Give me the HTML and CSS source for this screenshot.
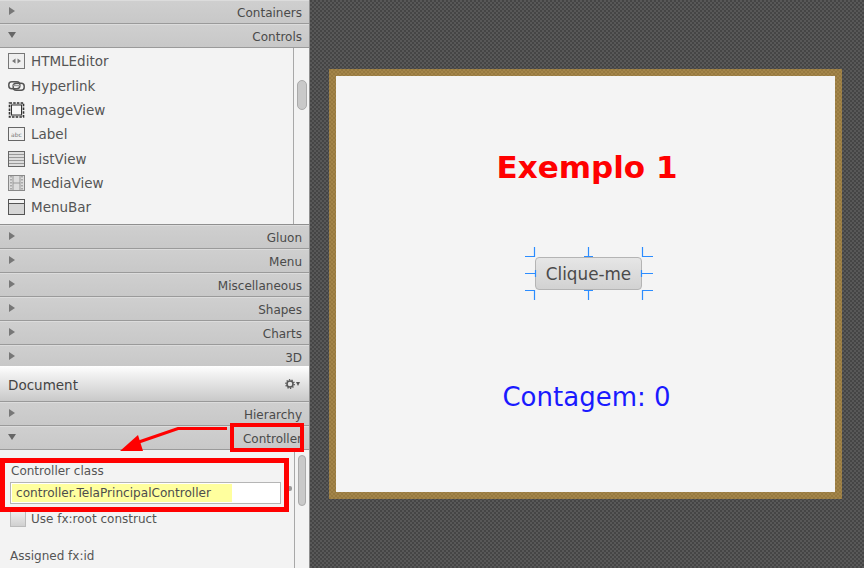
FILE: index.html
```html
<!DOCTYPE html>
<html lang="en">
<head>
	<meta charset="UTF-8">
	<title>Scene Builder</title>
	<link rel="stylesheet" href="styles.css">
</head>
<body>
	<div class="app">
		<div class="side">
			<div class="bar"><i class="tri"></i><span>Containers</span></div>
			<div class="bar"><i class="tri down"></i><span>Controls</span></div>
			<div class="lib">
				<div class="lib-list">
					<div class="item">
						<svg class="ico" viewBox="0 0 17 16"><rect x="0.500" y="0.500" width="16" height="15" fill="#efefef" stroke="#777"/><path d="M7.500 5.500L4 8L7.500 10.500zM9.500 5.500L13 8L9.500 10.500z" fill="#777"/></svg>
						HTMLEditor
					</div>
					<div class="item">
						<svg class="ico" viewBox="0 0 17 16"><rect x="0.800" y="3.800" width="11" height="7" rx="3" fill="none" stroke="#555" stroke-width="1.500"/><rect x="5.200" y="5.200" width="11" height="7" rx="3" fill="none" stroke="#555" stroke-width="1.500"/><path d="M4 7.500H13" stroke="#999" stroke-width="1.500"/></svg>
						Hyperlink
					</div>
					<div class="item">
						<svg class="ico" viewBox="0 0 17 16"><rect x="1.500" y="1" width="14" height="14" fill="#ddd" stroke="#333" stroke-width="1.600" stroke-dasharray="2.500 1.200"/><rect x="3.500" y="3" width="10" height="10" fill="#f8f8f8" stroke="#333"/></svg>
						ImageView
					</div>
					<div class="item">
						<svg class="ico" viewBox="0 0 17 16"><rect x="0.500" y="1.500" width="16" height="13" fill="#f0f0f0" stroke="#666"/><text x="8.500" y="10.500" text-anchor="middle" class="abc">abc</text></svg>
						Label
					</div>
					<div class="item">
						<svg class="ico" viewBox="0 0 17 16"><rect x="0.500" y="0.500" width="16" height="15" fill="#ddd" stroke="#666"/><path d="M1 3.500H16M1 6.500H16M1 9.500H16M1 12.500H16" stroke="#999"/></svg>
						ListView
					</div>
					<div class="item">
						<svg class="ico" viewBox="0 0 17 16"><rect x="0.500" y="0.500" width="16" height="15" fill="#ddd" stroke="#888"/><path d="M5 1V15M12 1V15M5 8H12" stroke="#999"/><path d="M3 1V15M14 1V15" stroke="#aaa" stroke-width="2" stroke-dasharray="1.500 1.500"/></svg>
						MediaView
					</div>
					<div class="item">
						<svg class="ico" viewBox="0 0 17 16"><rect x="0.500" y="0.500" width="16" height="15" fill="#d6d6d6" stroke="#555"/><rect x="1" y="1" width="15" height="3.500" fill="#f4f4f4"/><path d="M1 4.500H16" stroke="#555"/></svg>
						MenuBar
					</div>
					<div class="item">
						<svg class="ico" viewBox="0 0 17 16"><rect x="0.500" y="0.500" width="16" height="15" fill="#ddd" stroke="#333"/></svg>
					</div>
				</div>
				<div class="track"><div class="thumb thumb-lib"></div></div>
			</div>
			<div class="bar bar-sep"><i class="tri"></i><span>Gluon</span></div>
			<div class="bar"><i class="tri"></i><span>Menu</span></div>
			<div class="bar"><i class="tri"></i><span>Miscellaneous</span></div>
			<div class="bar"><i class="tri"></i><span>Shapes</span></div>
			<div class="bar"><i class="tri"></i><span>Charts</span></div>
			<div class="bar bar-last"><i class="tri"></i><span>3D</span></div>
			<div class="doc">
				<span>Document</span>
				<span class="gear">
					<svg width="10" height="10" viewBox="0 0 10 10"><circle cx="5" cy="5" r="3" fill="none" stroke="#555" stroke-width="1.500"/><circle cx="5" cy="5" r="4.200" fill="none" stroke="#555" stroke-width="1.400" stroke-dasharray="1.300 1.300"/></svg>
					<i class="gear-tri"></i>
				</span>
			</div>
			<div class="bar"><i class="tri"></i><span>Hierarchy</span></div>
			<div class="bar"><i class="tri down"></i><span>Controller</span></div>
			<div class="ctrl">
				<div class="ctrl-body">
					<div class="ctrl-label">Controller class</div>
					<div class="input"><span class="mark">controller.TelaPrincipalController</span></div>
					<div class="check-row"><i class="check"></i>Use fx:root construct</div>
					<div class="assigned">Assigned fx:id</div>
				</div>
				<div class="track track-ctrl"><div class="thumb thumb-ctrl"></div></div>
			</div>

			<!-- marcacoes vermelhas por cima da tela -->
			<i class="tiny-gear"></i>
			<div class="red-box box-class"></div>
			<div class="red-box box-title"></div>
			<svg class="red-arrow" width="310" height="568" viewBox="0 0 310 568">
				<path d="M227 428.500H178L136 443" fill="none" stroke="#f00" stroke-width="3"/>
				<path d="M120 451L138 435L143 451z" fill="#f00"/>
			</svg>
		</div>
		<div class="stage">
			<div class="frame">
				<h1 class="title">Exemplo 1</h1>
				<div class="btn-wrap">
					<div class="btn">Clique-me</div>
					<svg class="handles" width="130" height="56" viewBox="0 0 130 56">
						<path d="M10.500 1V11M1 10.500H11M118.500 1V11M118 10.500H129M64.500 1V11M60 10.500H69M10.500 44V54M1 44.500H11M118.500 44V54M118 44.500H129M64.500 44V54M60 44.500H69M1 27.500H11M118 27.500H129M11.500 24V31M117.500 24V31" fill="none" stroke="#2b8cff" stroke-width="1.200"/>
					</svg>
				</div>
				<div class="count">Contagem: 0</div>
			</div>
		</div>
	</div>
</body>
</html>
```

FILE: styles.css
```css
*{
	margin: 0;
	padding: 0;
	box-sizing: border-box;
}
html,body{
	width: 864px;
	height: 568px;
	overflow: hidden;
}
body{
	font-family: "DejaVu Sans", sans-serif;
	color: #4d4d4d;
}
.app{
	display: flex;
	width: 864px;
	height: 568px;
}
.side{
	position: relative;
	width: 310px;
	height: 568px;
	overflow: hidden;
	background: #f3f3f3;
	border-right: 1px solid #8f8f8f;
	display: flex;
	flex-direction: column;
}
.bar{
	flex: none;
	height: 24px;
	display: flex;
	align-items: center;
	justify-content: space-between;
	padding: 2px 7px 0 9px;
	background: linear-gradient(#cfcfcf, #c8c8c8);
	border-top: 1px solid #dcdcdc;
	border-bottom: 1px solid #9a9a9a;
	font-size: 12px;
	color: #4a4a4a;
}
.bar-last{
	height: 21px;
	padding-top: 4px;
	border-bottom: 0;
}
.tri{
	display: block;
	width: 0;
	height: 0;
	margin-top: -4px;
	border-left: 6px solid #777;
	border-top: 4px solid transparent;
	border-bottom: 4px solid transparent;
}
.tri.down{
	margin-left: -1px;
	border-top: 6px solid #666;
	border-left: 4px solid transparent;
	border-right: 4px solid transparent;
	border-bottom: 0;
}
.lib{
	flex: none;
	height: 177px;
	display: flex;
	border-bottom: 1px solid #8f8f8f;
	overflow: hidden;
}
.lib-list{
	flex: 1;
	padding: 1.100px 0 0 8px;
}
.item{
	height: 24.33px;
	display: flex;
	align-items: center;
	gap: 6px;
	font-size: 13.500px;
	color: #555;
}
.ico{
	width: 17px;
	height: 16px;
	flex: none;
}
.abc{
	font-size: 6px;
	fill: #777;
}
.track{
	flex: none;
	width: 16px;
	border-left: 1px solid #a8a8a8;
	position: relative;
}
.track-ctrl{
	width: 15px;
}
.thumb{
	position: absolute;
	left: 3px;
	width: 10px;
	background: #c9c9c9;
	border: 1px solid #aaa;
	border-radius: 5px;
}
.thumb-lib{
	top: 32px;
	height: 30px;
}
.thumb-ctrl{
	width: 8px;
	top: 5px;
	height: 51px;
}
.doc{
	flex: none;
	height: 36px;
	display: flex;
	align-items: center;
	justify-content: space-between;
	padding: 2px 9px 0 8px;
	background: linear-gradient(#fff, #f0f0f0 25%, #c9c9c9);
	border-bottom: 1px solid #999;
	font-size: 13.500px;
	color: #444;
}
.gear{
	display: flex;
	align-items: center;
	gap: 1px;
	margin-top: -2px;
}
.gear-tri{
	display: block;
	width: 0;
	height: 0;
	border-top: 4px solid #555;
	border-left: 2.500px solid transparent;
	border-right: 2.500px solid transparent;
}
.ctrl{
	flex: 1;
	display: flex;
	overflow: hidden;
}
.ctrl-body{
	flex: 1;
	padding: 14px 13px 0 10px;
	font-size: 12px;
	color: #555;
}
.ctrl-label{
	padding-left: 1px;
	line-height: 14px;
}
.input{
	height: 22px;
	margin-top: 4px;
	padding: 1px;
	background: #fff;
	border: 1px solid #b5b5b5;
}
.mark{
	display: block;
	width: 220px;
	height: 18px;
	padding-left: 4px;
	line-height: 18px;
	font-size: 12.100px;
	background: #ffff9e;
	color: #4d4d4d;
}
.check-row{
	display: flex;
	align-items: center;
	gap: 5px;
	height: 16px;
	margin-top: 7px;
}
.check{
	display: block;
	width: 16px;
	height: 16px;
	background: linear-gradient(#eee, #d0d0d0);
	border: 1px solid #bbb;
}
.assigned{
	margin-top: 22px;
}
.tiny-gear{
	position: absolute;
	left: 289px;
	top: 486px;
	width: 3px;
	height: 5px;
	background: #999;
	border-radius: 0 2px 2px 0;
}
.red-box{
	position: absolute;
	border-style: solid;
	border-color: #f00;
}
.box-class{
	left: 0;
	top: 458px;
	width: 289px;
	height: 54px;
	border-width: 5px;
}
.box-title{
	left: 230px;
	top: 423px;
	width: 74px;
	height: 29px;
	border-width: 4px;
}
.red-arrow{
	position: absolute;
	left: 0;
	top: 0;
}
.stage{
	flex: 1;
	display: flex;
	padding: 69px 22px 69px 19px;
	background-color: #4d4d4d;
	background-image: conic-gradient(#585858 25%, #454545 0 50%, #585858 0 75%, #454545 0);
	background-size: 4px 4px;
}
.frame{
	width: 513px;
	height: 430px;
	border: 7px solid transparent;
	background:
		linear-gradient(#f4f4f4, #f4f4f4) padding-box,
		conic-gradient(#a3854a 25%, #977a40 0 50%, #a3854a 0 75%, #977a40 0) border-box;
	background-size: auto, 4px 4px;
	display: flex;
	flex-direction: column;
	align-items: center;
	padding-top: 73px;
}
.title{
	margin-left: 3px;
	font-size: 31px;
	line-height: 37px;
	font-weight: bold;
	color: #f00;
}
.btn-wrap{
	position: relative;
	margin-top: 71px;
	margin-left: 6px;
}
.btn{
	width: 107px;
	height: 33px;
	display: flex;
	align-items: center;
	justify-content: center;
	font-size: 16.800px;
	color: #4a4a4a;
	background: linear-gradient(#e6e6e6, #d2d2d2);
	border: 1px solid #b4b4b4;
	border-radius: 4px;
}
.handles{
	position: absolute;
	left: -11px;
	top: -11px;
}
.count{
	margin-top: 90px;
	margin-left: 2px;
	font-size: 26px;
	line-height: 34px;
	color: #1a1aff;
}
```
